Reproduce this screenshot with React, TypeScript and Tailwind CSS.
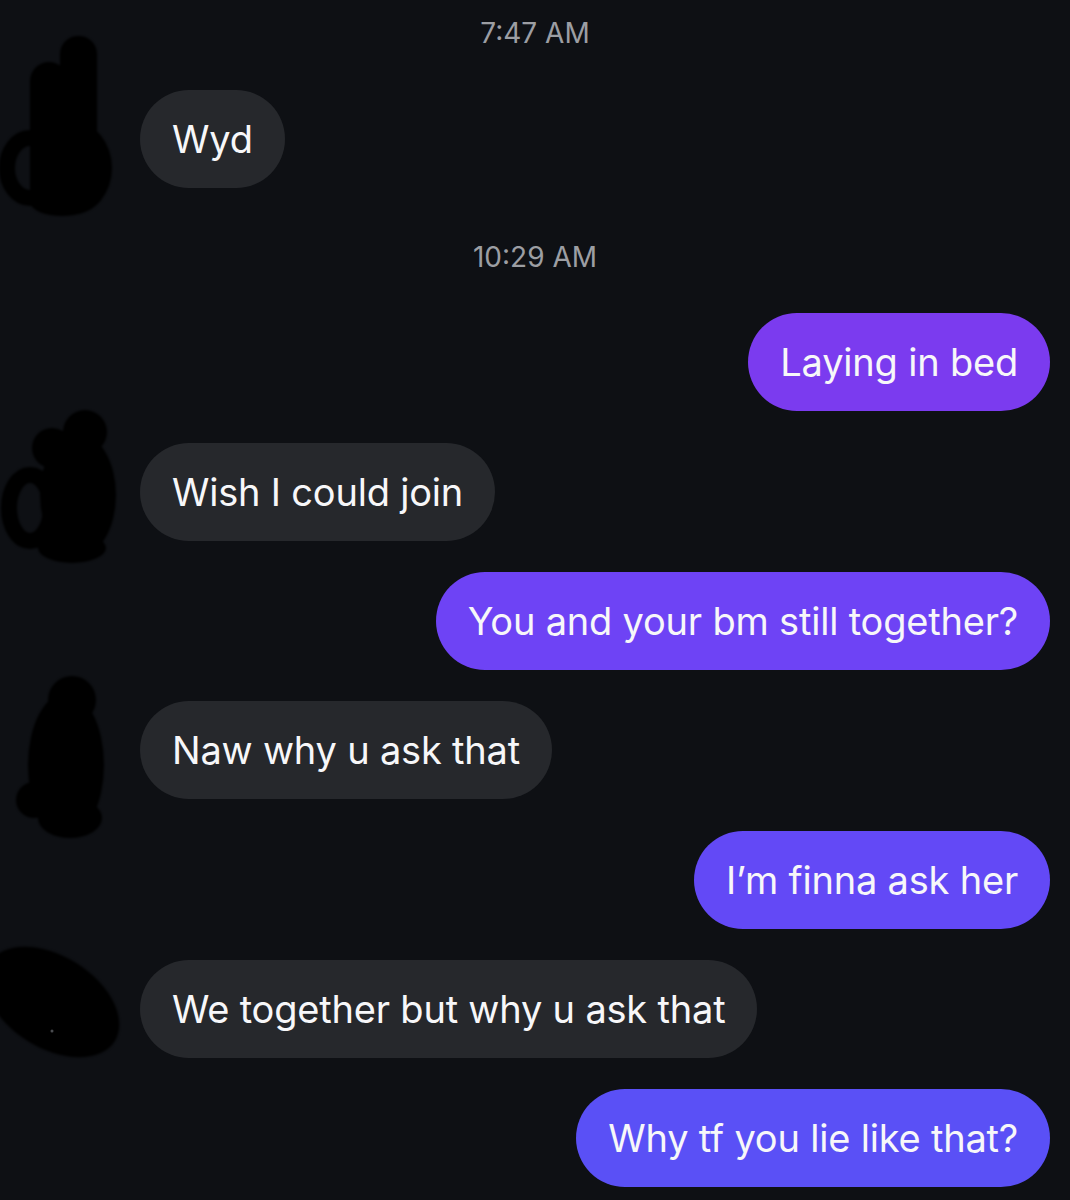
import React from "react";

type Msg = { side: "l" | "r"; text: string; color?: string; mt: string };

const Bubble = ({ text, color }: { text: string; color?: string }) => (
  <div
    className="h-[98px] rounded-full px-[32px] flex items-center text-[38px] text-[#f7f7f9] whitespace-nowrap tracking-[-0.2px]"
    style={{ backgroundColor: color ?? "#26282c" }}
  >
    {text}
  </div>
);

export default function App() {
  const rows: Msg[] = [
    { side: "r", text: "Laying in bed", color: "#7b3bef", mt: "mt-[37px]" },
    { side: "l", text: "Wish I could join", mt: "mt-[32px]" },
    { side: "r", text: "You and your bm still together?", color: "#6e43f5", mt: "mt-[31px]" },
    { side: "l", text: "Naw why u ask that", mt: "mt-[31px]" },
    { side: "r", text: "I\u2019m finna ask her", color: "#6349f6", mt: "mt-[32px]" },
    { side: "l", text: "We together but why u ask that", mt: "mt-[31px]" },
    { side: "r", text: "Why tf you lie like that?", color: "#5a50f6", mt: "mt-[31px]" },
  ];
  return (
    <div className="relative w-[1070px] h-[1200px] overflow-hidden bg-[#0e1014] font-['Inter','Roboto',sans-serif]">
      <div className="flex flex-col">
        <div className="mt-[14px] h-[38px] leading-[38px] text-center text-[28px] text-[#9c9ea3]">7:47 AM</div>
        <div className="mt-[38px] flex pl-[140px]">
          <Bubble text="Wyd" />
        </div>
        <div className="mt-[50px] h-[38px] leading-[38px] text-center text-[28px] text-[#9c9ea3]">10:29 AM</div>
        {rows.map((r, i) => (
          <div
            key={i}
            className={`${r.mt} flex ${r.side === "r" ? "justify-end pr-[20px]" : "justify-start pl-[140px]"}`}
          >
            <Bubble text={r.text} color={r.color} />
          </div>
        ))}
      </div>
      <svg
        className="absolute left-0 top-0 pointer-events-none"
        width="140"
        height="1200"
        viewBox="0 0 140 1200"
      >
        <defs>
          <filter id="soft" x="-20%" y="-20%" width="140%" height="140%">
            <feGaussianBlur stdDeviation="1.2" />
          </filter>
        </defs>
        <g fill="#020203" stroke="#020203" filter="url(#soft)">
          {/* avatar 1 */}
          <rect x="60" y="36" width="37" height="150" rx="18" stroke="none" />
          <rect x="30" y="62" width="38" height="145" rx="19" stroke="none" />
          <ellipse cx="74" cy="168" rx="38" ry="46" stroke="none" />
          <ellipse cx="30" cy="168" rx="23" ry="30" fill="none" strokeWidth="16" />
          <ellipse cx="62" cy="202" rx="32" ry="14" stroke="none" />
          {/* avatar 2 */}
          <circle cx="85" cy="432" r="22" stroke="none" />
          <circle cx="52" cy="448" r="20" stroke="none" />
          <ellipse cx="78" cy="495" rx="38" ry="62" stroke="none" />
          <ellipse cx="30" cy="508" rx="21" ry="33" fill="none" strokeWidth="16" />
          <ellipse cx="72" cy="548" rx="34" ry="15" stroke="none" />
          {/* avatar 3 */}
          <circle cx="72" cy="700" r="24" stroke="none" />
          <ellipse cx="66" cy="765" rx="38" ry="72" stroke="none" />
          <circle cx="34" cy="800" r="18" stroke="none" />
          <ellipse cx="70" cy="818" rx="32" ry="20" stroke="none" />
          {/* avatar 4 */}
          <ellipse cx="52" cy="1002" rx="74" ry="46" transform="rotate(32 52 1002)" stroke="none" />
        </g>
        <circle cx="52" cy="1031" r="1.5" fill="#4a4c50" />
      </svg>
    </div>
  );
}
